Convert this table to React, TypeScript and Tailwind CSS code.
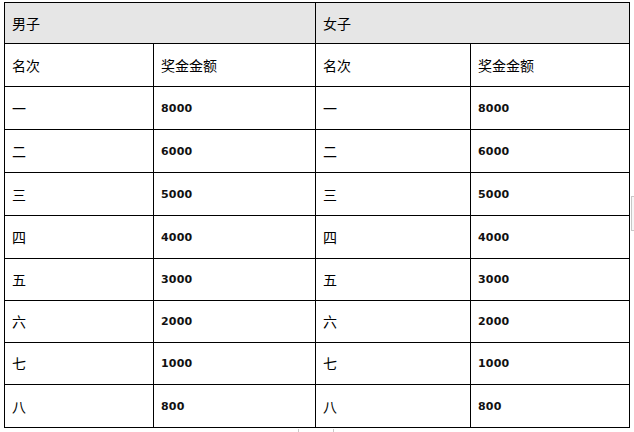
import React from 'react';

const ranks = [
  { rank: '一', amount: '8000' },
  { rank: '二', amount: '6000' },
  { rank: '三', amount: '5000' },
  { rank: '四', amount: '4000' },
  { rank: '五', amount: '3000' },
  { rank: '六', amount: '2000' },
  { rank: '七', amount: '1000' },
  { rank: '八', amount: '800' },
];

const cjk = "font-['Noto_Sans_CJK_SC',sans-serif] text-[14px] text-black";
const num = "font-['DejaVu_Sans',sans-serif] text-[11px] font-bold text-[#111] pt-[2px] tracking-[0.2px]";
const cell = 'flex items-center pl-[7px] border-r border-b border-black';

const App = () => {
  return (
    <div className="relative w-[634px] h-[432px] bg-white overflow-hidden">
      <div className="pt-[2px] pl-[4px]">
        <div className="grid w-[626px] grid-cols-[149px_162px_155px_159px] grid-rows-[41px_43px_43px_43px_43px_43px_42px_42px_42px_43px] border-l border-t border-black">
          {/* Header */}
          <div className={`${cell} ${cjk} col-span-2 bg-[#e6e6e6]`}>男子</div>
          <div className={`${cell} ${cjk} col-span-2 bg-[#e6e6e6]`}>女子</div>

          {/* Column titles */}
          <div className={`${cell} ${cjk}`}>名次</div>
          <div className={`${cell} ${cjk}`}>奖金金额</div>
          <div className={`${cell} ${cjk}`}>名次</div>
          <div className={`${cell} ${cjk}`}>奖金金额</div>

          {ranks.map((r) => (
            <React.Fragment key={r.rank}>
              <div className={`${cell} ${cjk}`}>{r.rank}</div>
              <div className={`${cell} ${num}`}>{r.amount}</div>
              <div className={`${cell} ${cjk}`}>{r.rank}</div>
              <div className={`${cell} ${num}`}>{r.amount}</div>
            </React.Fragment>
          ))}
        </div>
      </div>

      {/* scroll handle remnants */}
      <div className="absolute left-[631px] top-[196px] w-[3px] h-[35px] border-t border-b border-l border-[#c8c8c8] bg-[#f7f7f7]" />
      <div className="absolute left-[298px] top-[429px] w-[36px] h-[3px] border-l border-r border-[#c8c8c8]" />
    </div>
  );
};

export default App;
